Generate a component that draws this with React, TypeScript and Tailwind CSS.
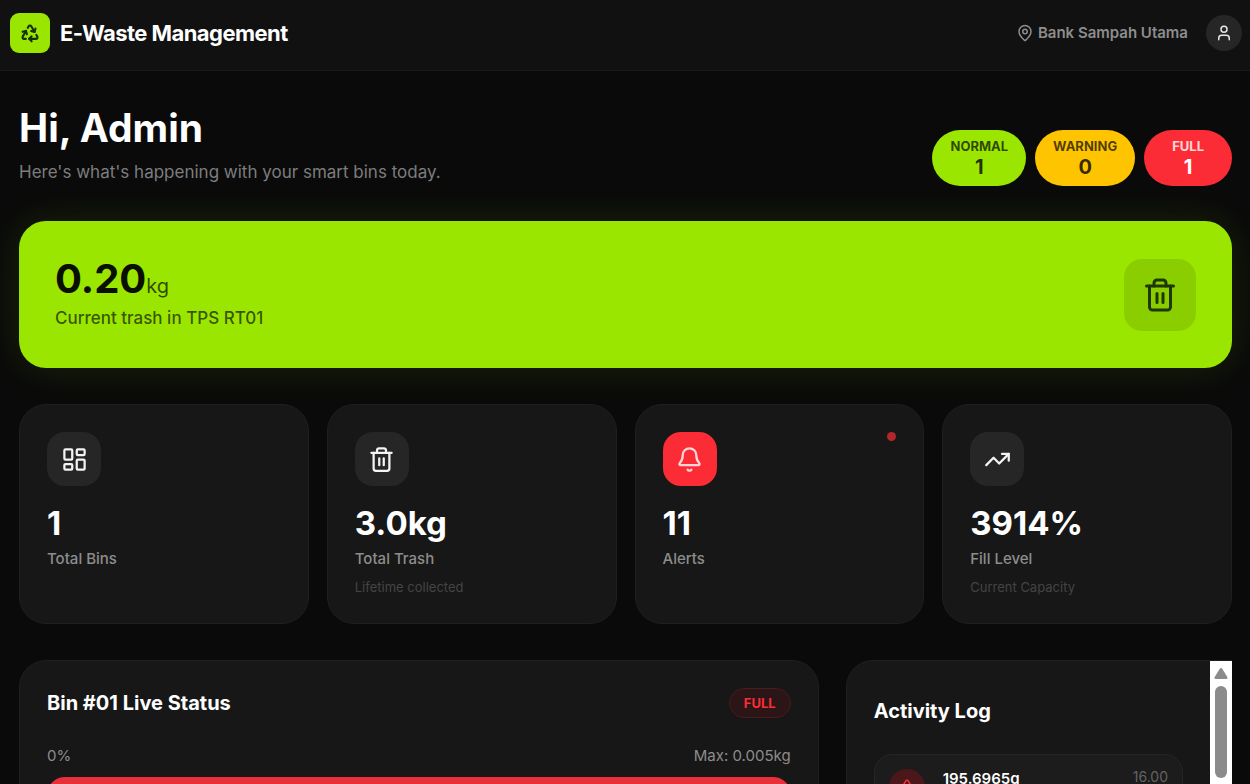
import type { ReactNode } from "react";
import {
  Bell,
  LayoutDashboard,
  MapPin,
  Recycle,
  Trash2,
  TrendingUp,
  TriangleAlert,
  User,
} from "lucide-react";

type StatCardProps = {
  icon: ReactNode;
  value: string;
  label: string;
  note?: string;
  alert?: boolean;
};

function StatCard({ icon, value, label, note, alert }: StatCardProps) {
  return (
    <div className="relative min-h-[220px] rounded-[27px] border border-[#1f1f1f] bg-[#171717] px-[27px] pt-[27px]">
      <div
        className={
          alert
            ? "flex size-[54px] items-center justify-center rounded-[18px] bg-[#fb2c36] text-white/80"
            : "flex size-[54px] items-center justify-center rounded-[18px] bg-[#262626] text-gray-100"
        }
      >
        {icon}
      </div>
      <p className="mt-4 text-[33px] leading-[42px] font-bold text-white">{value}</p>
      <p className="mt-1 text-[15px] leading-[22px] font-medium text-[#8d8d8d]">{label}</p>
      {note && <p className="mt-[7px] text-[13px] leading-5 text-[#444444]">{note}</p>}
      {alert && (
        <span className="absolute top-[27px] right-[27px] size-[9px] rounded-full bg-[#b3262d]" />
      )}
    </div>
  );
}

export default function App() {
  return (
    <div className="h-screen overflow-hidden bg-[#0a0a0a] font-['Inter','Liberation_Sans',sans-serif] text-white">
      <header className="flex items-center justify-between border-b border-[#1a1a1a] bg-[#111111] pt-[13px] pr-2 pb-[17px] pl-[10px]">
        <div className="flex items-center gap-[10px]">
          <div className="flex size-10 items-center justify-center rounded-[9px] bg-[#9ae600] text-[#16300a]">
            <Recycle size={20} strokeWidth={2.5} />
          </div>
          <h1 className="text-[22px] leading-7 font-bold tracking-tight">E-Waste Management</h1>
        </div>
        <div className="flex items-center gap-[18px]">
          <div className="flex items-center gap-1 text-[15px] text-[#8d8d8d]">
            <MapPin size={18} />
            <span className="font-semibold">Bank Sampah Utama</span>
          </div>
          <button
            type="button"
            aria-label="Account"
            className="flex size-9 items-center justify-center rounded-full bg-[#262626] text-gray-200"
          >
            <User size={18} />
          </button>
        </div>
      </header>

      <main className="pt-[35px] pr-[18px] pl-[19px]">
        <div className="flex items-end justify-between">
          <div>
            <h2 className="text-[39px] leading-[44px] font-bold">Hi, Admin</h2>
            <p className="mt-2 text-[17px] leading-7 text-[#7d7d7d]">
              Here's what's happening with your smart bins today.
            </p>
          </div>
          <div className="flex gap-[9px] text-center">
            <div className="rounded-full bg-[#9ae600] px-[18px] py-[7px] text-black">
              <p className="text-[13px] leading-[18px] font-bold text-black/70">NORMAL</p>
              <p className="text-xl leading-6 font-bold text-black/80">1</p>
            </div>
            <div className="rounded-full bg-[#ffc400] px-[18px] py-[7px] text-black">
              <p className="text-[13px] leading-[18px] font-bold text-black/70">WARNING</p>
              <p className="text-xl leading-6 font-bold text-black/80">0</p>
            </div>
            <div className="rounded-full bg-[#fb2c36] px-7 py-[7px] text-white">
              <p className="text-[13px] leading-[18px] font-bold text-white/80">FULL</p>
              <p className="text-xl leading-6 font-bold">1</p>
            </div>
          </div>
        </div>

        <section className="mt-[35px] flex items-center justify-between rounded-[27px] bg-[#9ae600] p-9 shadow-[0_0_40px_rgba(154,230,0,0.12)]">
          <div>
            <p className="flex items-baseline text-[#0a0f00]">
              <span className="text-[40px] leading-[44px] font-bold">0.20</span>
              <span className="text-xl leading-7 text-black/70">kg</span>
            </p>
            <p className="mt-1 text-[17px] leading-[27px] font-medium text-black/65">
              Current trash in TPS RT01
            </p>
          </div>
          <div className="flex size-[72px] items-center justify-center rounded-[18px] bg-black/10 text-[#1e3804]">
            <Trash2 size={36} />
          </div>
        </section>

        <section className="mt-9 grid grid-cols-4 gap-[18px]">
          <StatCard icon={<LayoutDashboard size={27} />} value="1" label="Total Bins" />
          <StatCard
            icon={<Trash2 size={27} />}
            value="3.0kg"
            label="Total Trash"
            note="Lifetime collected"
          />
          <StatCard icon={<Bell size={27} />} value="11" label="Alerts" alert />
          <StatCard
            icon={<TrendingUp size={27} />}
            value="3914%"
            label="Fill Level"
            note="Current Capacity"
          />
        </section>

        <section className="mt-9 grid grid-cols-3 gap-[27px]">
          <div className="col-span-2 rounded-[27px] border border-[#1f1f1f] bg-[#171717] p-[27px]">
            <div className="flex items-center justify-between">
              <h3 className="text-xl leading-7 font-bold">Bin #01 Live Status</h3>
              <span className="rounded-full border border-[#4a1a1d] bg-[#2c1517] px-[14px] py-1 text-[13px] leading-5 font-bold text-[#fb2c36]">
                FULL
              </span>
            </div>
            <div className="mt-[26px] flex justify-between text-[15px] leading-6 text-[#8d8d8d]">
              <span>0%</span>
              <span>Max: 0.005kg</span>
            </div>
            <div className="mt-[9px] h-9 rounded-full bg-[#e7303a]" />
          </div>

          <div className="flex h-[440px] overflow-hidden rounded-l-[27px] border border-r-0 border-[#1f1f1f] bg-[#171717]">
            <div className="flex-1 px-[27px] pt-9">
              <h3 className="text-xl leading-7 font-bold">Activity Log</h3>
              <ul className="mt-[29px]">
                <li className="flex items-start gap-[18px] rounded-[18px] border border-[#262626] bg-[#1c1c1c] px-[14px] py-[14px]">
                  <span className="flex size-9 items-center justify-center rounded-full bg-[#4b171b] text-[#fb2c36]">
                    <TriangleAlert size={18} />
                  </span>
                  <span className="flex-1 text-[15px] leading-5 font-semibold">195.6965g</span>
                  <time className="text-sm leading-4 text-[#636363]">16.00</time>
                </li>
              </ul>
            </div>
            {/* scroll track */}
            <div className="flex w-[22px] flex-col items-center bg-white pt-[7px]">
              <svg width="14" height="11" viewBox="0 0 14 11" fill="#8b8b8b">
                <path d="M7 0C7.600 0 8 0.400 8.400 1L13.300 9C13.800 10 13.500 11 12.300 11H1.700C0.500 11 0.200 10 0.700 9L5.600 1C6 0.400 6.400 0 7 0Z" />
              </svg>
              <div className="mt-[7px] h-[92px] w-3 rounded-full bg-[#8b8b8b]" />
            </div>
          </div>
        </section>
      </main>
    </div>
  );
}
